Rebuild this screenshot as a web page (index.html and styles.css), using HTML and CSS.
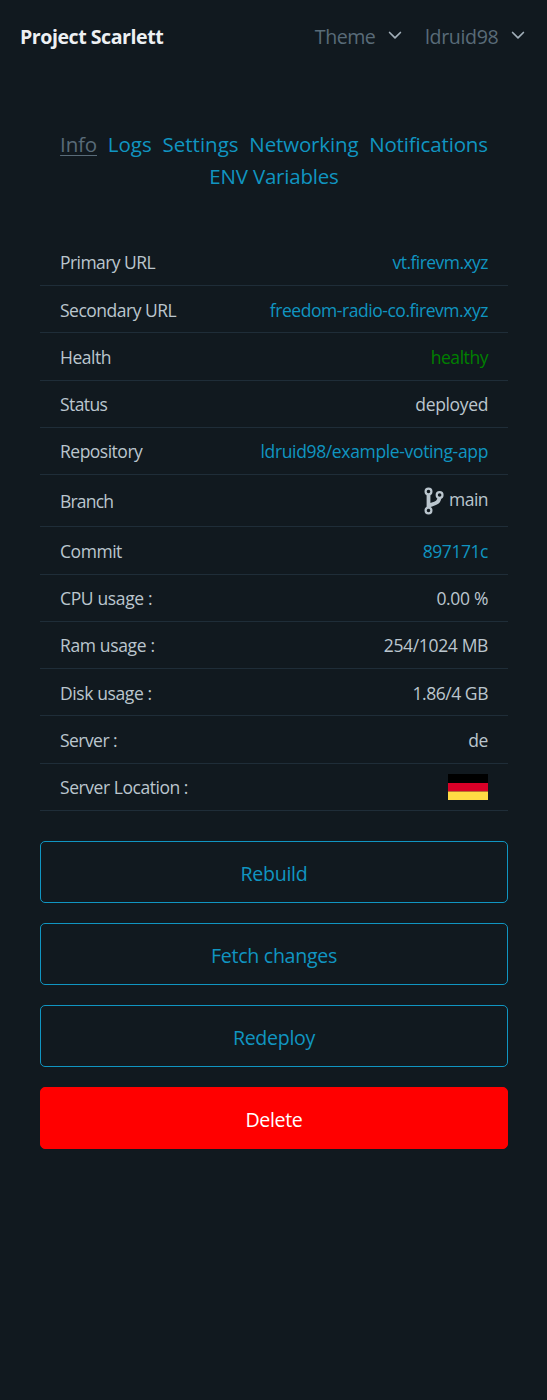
FILE: index.html
```html
<!DOCTYPE html>
<html lang="en">
<head>
<meta charset="utf-8">
<title>Project Scarlett</title>
<link rel="stylesheet" href="styles.css">
</head>
<body>
<header class="topbar">
  <strong class="brand">Project Scarlett</strong>
  <nav class="menus">
    <a class="menu theme"><span class="t50">Theme</span><svg class="chevron" viewBox="0 0 24 24"><polyline points="5.500 9 12 15.500 18.500 9"/></svg></a>
    <a class="menu user"><span class="t35">ldruid98</span><svg class="chevron" viewBox="0 0 24 24"><polyline points="5.500 9 12 15.500 18.500 9"/></svg></a>
  </nav>
</header>
<main class="content">
  <nav class="tabs">
    <a class="tab active t15">Info</a><a class="tab">Logs</a><a class="tab">Settings</a><a class="tab t15">Networking</a><a class="tab t15">Notifications</a><a class="tab t20">ENV Variables</a>
  </nav>
  <section class="details">
    <div class="row"><span class="t55">Primary URL</span><a class="link t55">vt.firevm.xyz</a></div>
    <div class="row"><span class="t50">Secondary URL</span><a class="link t45">freedom-radio-co.firevm.xyz</a></div>
    <div class="row"><span class="t45">Health</span><span class="healthy t45">healthy</span></div>
    <div class="row"><span class="t60">Status</span><span class="t35">deployed</span></div>
    <div class="row"><span class="t50">Repository</span><a class="link t35">ldruid98/example-voting-app</a></div>
    <div class="row branch"><span class="t80">Branch</span><span class="branch-value"><svg class="fork" viewBox="0 0 20 28"><path d="M4.500 7v14M15.500 10c0 6-5 6.500-10.500 8.500" stroke-width="3.800"/><circle cx="4.500" cy="4.500" r="2.900"/><circle cx="4.500" cy="23.500" r="2.900"/><circle cx="15.600" cy="8" r="2.900"/></svg><span class="t55">main</span></span></div>
    <div class="row"><span class="t45">Commit</span><a class="link t45">897171c</a></div>
    <div class="row"><span class="t35">CPU usage :</span><span class="t35">0.00 %</span></div>
    <div class="row"><span class="t35">Ram usage :</span><span class="t35">254/1024 MB</span></div>
    <div class="row"><span class="t40">Disk usage :</span><span class="t45">1.86/4 GB</span></div>
    <div class="row"><span class="t55">Server :</span><span class="t35">de</span></div>
    <div class="row"><span class="t45">Server Location :</span><svg class="flag" viewBox="0 0 40 26"><path fill="#000" d="M0 0h40v9H0z"/><path fill="#d80027" d="M0 9h40v8.500H0z"/><path fill="#ffda44" d="M0 17.500h40V26H0z"/></svg></div>
  </section>
  <div class="actions">
    <button class="btn t30">Rebuild</button>
    <button class="btn t30">Fetch changes</button>
    <button class="btn t30">Redeploy</button>
    <button class="btn danger t35">Delete</button>
  </div>
</main>
</body>
</html>
```
FILE: styles.css
```css
* { box-sizing: border-box; }
body { margin: 0; min-height: 1400px; background: #11191f; color: #bbc6ce; font-family: "Open Sans", "Noto Sans", sans-serif; font-size: 17.5px; }
.topbar { height: 73px; padding: 0 19px 0 20px; display: flex; justify-content: space-between; align-items: center; font-size: 19.6px; }
.brand { color: #edf0f3; font-weight: 700; letter-spacing: -.47px; }
.menus { display: flex; gap: 20px; color: #596b78; }
.menu { display: flex; align-items: center; gap: 9.6px; }
.chevron { width: 20px; height: 20px; margin-top: -4px; fill: none; stroke: #a2afb9; stroke-width: 2; stroke-linecap: round; stroke-linejoin: round; }
.content { padding: 54.75px 39px 0 40px; }
.tabs { display: flex; flex-wrap: wrap; justify-content: center; column-gap: 10.8px; font-size: 20.5px; line-height: 32px; padding: 0 15px; height: 111px; align-content: flex-start; }
.tab { color: #1095c1; }
.tab.active { color: #596b78; text-decoration: underline 1px; text-underline-offset: 3px; }
.row { height: 47.25px; padding: 1.2px 20px 0; display: flex; justify-content: space-between; align-items: center; border-bottom: 1px solid #1f2d38; }
.row.branch { height: 52.25px; padding-top: 0; }
.branch-value { display: flex; align-items: center; gap: 5px; }
.branch-value span { margin-top: -3px; }
.fork { width: 20px; height: 28px; fill: none; stroke: #bbc6ce; stroke-width: 2.2; }
.flag { width: 40px; height: 26px; margin-top: -1.2px; }
.link { color: #1095c1; }
.healthy { color: green; }
.actions { display: grid; gap: 20px; padding-top: 30px; }
.btn { height: 62px; padding: 4px 6px 0; border: 1px solid #1095c1; border-radius: 5px; background: none; color: #1095c1; font: inherit; font-size: 19.6px; }
.btn.danger { background: red; border-color: red; color: #fff; }

/* Letter-spacing steps, named in hundredths of a pixel */
.t15 { letter-spacing: -.15px; }
.t20 { letter-spacing: -.2px; }
.t30 { letter-spacing: -.3px; }
.t35 { letter-spacing: -.35px; }
.t40 { letter-spacing: -.4px; }
.t45 { letter-spacing: -.45px; }
.t50 { letter-spacing: -.5px; }
.t55 { letter-spacing: -.55px; }
.t60 { letter-spacing: -.6px; }
.t80 { letter-spacing: -.8px; }
```
